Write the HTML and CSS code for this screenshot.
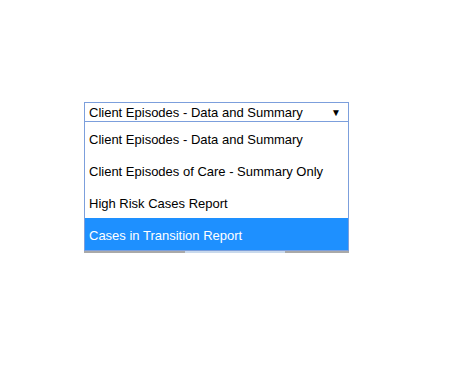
FILE: index.html
```html
<html><head><link rel="stylesheet" href="styles.css"></head><body>
<div class="picker">
  <div class="select">
    <span class="value">Client Episodes - Data and Summary</span>
    <span class="arrow">&#9660;</span>
  </div>
  <ul class="options">
    <li>Client Episodes - Data and Summary</li>
    <li>Client Episodes of Care - Summary Only</li>
    <li>High Risk Cases Report</li>
    <li class="active">Cases in Transition Report</li>
  </ul>
  <div class="shadow"><span></span></div>
</div>
</body></html>
```
FILE: styles.css
```css
body{margin:0;background:#fff;font-family:"Liberation Sans",Arial,sans-serif;font-size:13px;color:#000;}
.picker{margin:102px 0 0 84px;width:265px;}
.select{display:flex;align-items:center;justify-content:space-between;height:18px;border:1px solid #7c9fdc;padding:0 7px 0 4px;}
.select .value{line-height:18px;padding-top:2px;}
.select .arrow{font-size:10px;padding-top:1px;}
.options{list-style:none;margin:0;padding:0;border:1px solid #7c9fdc;border-top:0;}
.options li{height:28px;line-height:28px;padding:4px 4px 0;}
.options li.active{background:#1e90ff;color:#fff;}
.shadow{height:2px;background:#a9a9a9;display:flex;}
.shadow span{margin-left:101px;width:100px;background:#c9d9ec;}
```
